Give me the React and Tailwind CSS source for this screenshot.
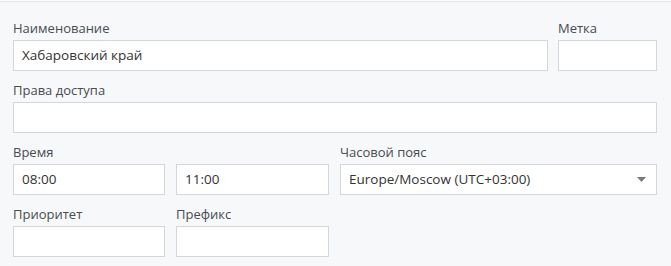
import React from "react";

const font = { fontFamily: '"Open Sans", "Noto Sans", sans-serif' };

function Label({ children }) {
  return <div className="h-[16px] mb-[4px] text-[13px] leading-[16px] text-[#484b50] whitespace-nowrap">{children}</div>;
}

function Input({ value, className = "" }) {
  return (
    <div className={"h-[31px] border border-[#d3d6db] bg-white px-[8px] flex items-center text-[13.5px] text-[#333] " + className}>
      {value}
    </div>
  );
}

export default function App() {
  return (
    <div className="w-[671px] h-[266px] bg-[#f7f8fa] border-t border-[#e1e4e8] mt-[1px] pl-[13px] pr-[14px] pt-[18px]" style={font}>
      <div className="flex gap-[10px]">
        <div className="flex-1">
          <Label>Наименование</Label>
          <Input value="Хабаровский край" />
        </div>
        <div className="w-[99px]">
          <Label>Метка</Label>
          <Input value="" />
        </div>
      </div>
      <div className="mt-[11px]">
        <Label>Права доступа</Label>
        <Input value="" />
      </div>
      <div className="mt-[11px] grid grid-cols-[152px_153px_1fr] gap-x-[11px] gap-y-[11px]">
        <div>
          <Label>Время</Label>
          <Input value="08:00" />
        </div>
        <div>
          <Label>&nbsp;</Label>
          <Input value="11:00" />
        </div>
        <div>
          <Label>Часовой пояс</Label>
          <div className="h-[31px] border border-[#d3d6db] bg-white pl-[8px] pr-[10px] flex items-center justify-between text-[13.5px] text-[#333]">
            <span>Europe/Moscow (UTC+03:00)</span>
            <svg width="9" height="5" viewBox="0 0 9 5"><path d="M0 0h9L4.5 5z" fill="#7a7a7a" /></svg>
          </div>
        </div>
        <div>
          <Label>Приоритет</Label>
          <Input value="" />
        </div>
        <div>
          <Label>Префикс</Label>
          <Input value="" />
        </div>
      </div>
    </div>
  );
}
